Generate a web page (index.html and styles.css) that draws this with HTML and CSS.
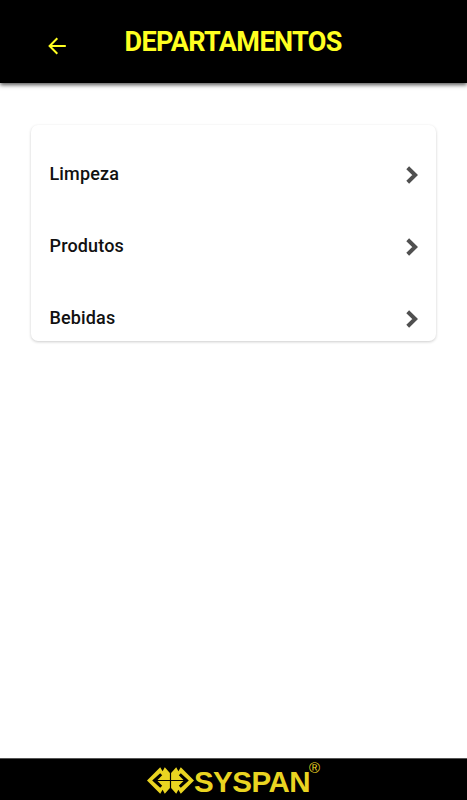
FILE: index.html
```html
<!DOCTYPE html>
<html lang="pt-BR">
<head>
<meta charset="UTF-8">
<meta name="viewport" content="width=device-width, initial-scale=1.0">
<title>Departamentos</title>
<link rel="stylesheet" href="styles.css">
</head>
<body>
    <header class="topo">
        <a href="#" class="voltar" aria-label="Voltar">
            <svg width="18" height="18" viewBox="0 0 18 18">
                <path d="M17.8 9H2M9.3 1.2L1.6 9L9.3 16.8" fill="none" stroke="currentColor" stroke-width="2"/>
            </svg>
        </a>
        <h1 class="titulo">DEPARTAMENTOS</h1>
    </header>

    <main class="conteudo">
        <!-- Lista de departamentos -->
        <div class="lista">
            <a href="#" class="item">
                <span>Limpeza</span>
                <svg class="seta" width="12" height="18" viewBox="0 0 12 18"><path d="M1.7 1.7L9.2 9L1.7 16.3" /></svg>
            </a>
            <a href="#" class="item">
                <span>Produtos</span>
                <svg class="seta" width="12" height="18" viewBox="0 0 12 18"><path d="M1.7 1.7L9.2 9L1.7 16.3" /></svg>
            </a>
            <a href="#" class="item">
                <span>Bebidas</span>
                <svg class="seta" width="12" height="18" viewBox="0 0 12 18"><path d="M1.7 1.7L9.2 9L1.7 16.3" /></svg>
            </a>
        </div>
    </main>

    <footer class="rodape">
        <svg class="logo" width="47" height="27" viewBox="0 0 47 27">
            <g id="metade" fill="#e9d421">
                <path d="M0 13.5L13.2 0.3L15.6 4.2L17.8 0.3L22.9 6V12.9H10.5L15.2 8.2L13.2 6.2L5.2 13.5L13.2 20.8L15.2 18.8L10.5 14.1H22.9V21L17.8 26.7L15.6 22.8L13.2 26.7Z"/>
            </g>
            <use href="#metade" transform="translate(47 0) scale(-1 1)"/>
        </svg>
        <span class="marca">SYSPAN</span>
        <span class="registrada">®</span>
    </footer>
</body>
</html>
```
FILE: styles.css
```css
* {
    box-sizing: border-box;
}

body {
    margin: 0;
    height: 100vh;
    display: flex;
    flex-direction: column;
    background-color: #fff;
    font-family: Roboto, Arial, sans-serif;
}

/* Barra superior */
.topo {
    display: flex;
    align-items: flex-start;
    height: 83px;
    padding: 26px 48px 0;
    background-color: #000;
    color: #ffff21;
    box-shadow: 0 2px 4px rgba(0, 0, 0, 0.65);
}

.voltar {
    display: flex;
    margin-top: 11px;
    color: #ffff21;
}

.titulo {
    margin: 0 0 0 58.5px;
    font-size: 27px;
    line-height: 32px;
    font-weight: 700;
    letter-spacing: -0.6px;
    white-space: nowrap;
}

.conteudo {
    flex: 1;
    padding: 42px 31px;
}

.lista {
    padding-top: 13px;
    height: 216px;
    border-radius: 7px;
    background-color: #fff;
    box-shadow: 0 1px 3px rgba(0, 0, 0, 0.2);
    overflow: hidden;
}

.item {
    display: flex;
    align-items: center;
    justify-content: space-between;
    height: 72px;
    padding: 0 18px 0 18.5px;
    color: #111;
    font-size: 18px;
    font-weight: 500;
    letter-spacing: 0.15px;
    text-decoration: none;
}

.item span {
    padding-bottom: 1px;
}

.seta {
    margin-top: 1px;
    fill: none;
    stroke: #505050;
    stroke-width: 4;
}

/* Rodapé com a marca */
.rodape {
    display: flex;
    justify-content: center;
    height: 42px;
    padding-top: 8px;
    background-color: #000;
    border-top: 1px solid #555;
    color: #e9d421;
    font-family: "Liberation Sans", Arial, sans-serif;
}

.marca {
    font-size: 29.5px;
    line-height: 29px;
    font-weight: 700;
    letter-spacing: -0.5px;
}

.registrada {
    margin: -7px 0 0 -1px;
    font-size: 15px;
    line-height: 16px;
}
```
